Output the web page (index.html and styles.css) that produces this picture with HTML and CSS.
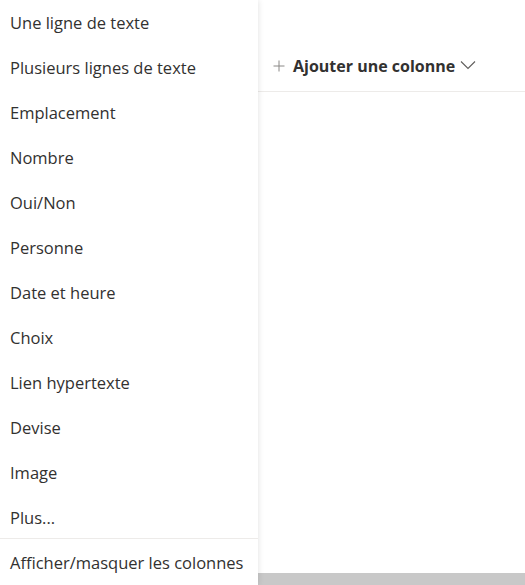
FILE: index.html
```html
<!DOCTYPE html>
<html lang="fr">
<head>
<meta charset="utf-8">
<link rel="stylesheet" href="styles.css">
</head>
<body>
<div class="page">
  <div class="header">
    <button class="add-col">
      <svg class="plus" width="12" height="12" viewBox="0 0 12 12"><path d="M6 0.5V11.5M0.5 6H11.5" stroke="#8a8886" stroke-width="1" fill="none"/></svg>
      <span class="add-label">Ajouter une colonne</span>
      <svg class="chev" width="16" height="10" viewBox="0 0 16 10"><path d="M1 1.5L8 8.5L15 1.5" stroke="#605e5c" stroke-width="1.1" fill="none"/></svg>
    </button>
  </div>
  <div class="body-area"></div>
  <div class="hscroll"></div>
</div>
<div class="menu">
  <ul class="menu-list">
    <li class="item">Une ligne de texte</li>
    <li class="item">Plusieurs lignes de texte</li>
    <li class="item">Emplacement</li>
    <li class="item">Nombre</li>
    <li class="item">Oui/Non</li>
    <li class="item">Personne</li>
    <li class="item">Date et heure</li>
    <li class="item">Choix</li>
    <li class="item">Lien hypertexte</li>
    <li class="item">Devise</li>
    <li class="item">Image</li>
    <li class="item">Plus...</li>
    <li class="divider"></li>
    <li class="item">Afficher/masquer les colonnes</li>
  </ul>
</div>
</body>
</html>
```
FILE: styles.css
```css
html, body {
  margin: 0;
  padding: 0;
  background: #ffffff;
  font-family: "Open Sans", "Noto Sans", sans-serif;
  color: #323130;
  overflow: hidden;
}
.page {
  width: 525px;
  height: 585px;
  display: flex;
  flex-direction: column;
}
.header {
  margin-top: 46px;
  height: 45px;
  border-bottom: 1px solid #edebe9;
  display: flex;
  align-items: center;
  padding-left: 273px;
}
.add-col {
  display: flex;
  align-items: center;
  background: none;
  border: none;
  padding: 0;
  font-family: inherit;
  color: #323130;
  margin-top: -5px;
}
.plus {
  margin-right: 8px;
}
.add-label {
  font-size: 16px;
  font-weight: 700;
}
.chev {
  margin-left: 5px;
  margin-top: -2px;
}
.body-area {
  flex: 1;
}
.hscroll {
  height: 12px;
  background: #c8c8c8;
}
.menu {
  position: absolute;
  left: 0;
  top: 0;
  width: 258px;
  height: 585px;
  background: #ffffff;
  box-shadow: 0 0 6px rgba(0, 0, 0, 0.13);
}
.menu-list {
  list-style: none;
  margin: 0;
  padding: 0;
}
.item {
  height: 45px;
  display: flex;
  align-items: center;
  padding-left: 10px;
  font-size: 16.5px;
  color: #323130;
}
.divider {
  height: 1px;
  background: #edebe9;
  margin-top: -2px;
  margin-bottom: 1px;
}
```
